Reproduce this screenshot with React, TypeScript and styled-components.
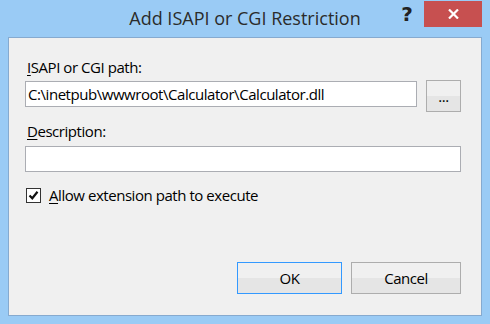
import React from 'react'
import styled, { createGlobalStyle } from 'styled-components'

const GlobalStyle = createGlobalStyle`
  html, body {
    margin: 0;
    padding: 0;
    background: #9acbf5;
  }
`

const Frame = styled.div`
  width: 490px;
  height: 324px;
  box-sizing: border-box;
  padding: 0 8px 8px 8px;
  background: #9acbf5;
  display: flex;
  flex-direction: column;
  font-family: 'Open Sans', 'Noto Sans', sans-serif;
  color: #000;
`

const TitleBar = styled.div`
  height: 37px;
  display: grid;
  grid-template-columns: 1fr auto 1fr;
  align-items: start;
`

const Title = styled.div`
  grid-column: 2;
  font-size: 18px;
  line-height: 37px;
  color: #2b2b2b;
  white-space: nowrap;
`

const Controls = styled.div`
  grid-column: 3;
  justify-self: end;
  display: flex;
  align-items: flex-start;
`

const HelpButton = styled.div`
  width: 34px;
  height: 28px;
  display: flex;
  align-items: center;
  justify-content: center;
  font-family: 'DejaVu Sans', sans-serif;
  font-weight: bold;
  font-size: 20px;
  color: #222;
`

const CloseButton = styled.div`
  width: 58px;
  height: 26px;
  margin-top: 1px;
  background: #c75050;
  display: flex;
  align-items: center;
  justify-content: center;
`

const Client = styled.div`
  flex: 1;
  background: #f0f0f0;
  border: 1px solid #86aacf;
  padding: 19px 20px 21px 16px;
  display: flex;
  flex-direction: column;
  font-size: 15px;
  line-height: 20px;
  letter-spacing: -0.45px;
`

const Label = styled.div<{ $gap?: number }>`
  padding-left: 2px;
  margin-top: ${p => p.$gap ?? 0}px;
`

const Key = styled.span`
  text-decoration: underline;
  text-underline-offset: 2px;
  text-decoration-thickness: 1px;
`

const FieldRow = styled.div`
  display: flex;
  align-items: flex-start;
  gap: 9px;
  margin-top: 3px;
`

const Field = styled.div<{ $top?: number }>`
  flex: 1;
  height: 26px;
  box-sizing: border-box;
  margin-top: ${p => p.$top ?? 0}px;
  background: #fff;
  border: 1px solid #abadb3;
  padding: 0 2px;
  line-height: 24px;
  white-space: nowrap;
  overflow: hidden;
`

const Button = styled.div<{ $width: number; $default?: boolean }>`
  width: ${p => p.$width}px;
  height: 32px;
  box-sizing: border-box;
  border: 1px solid ${p => (p.$default ? '#3399ff' : '#adadad')};
  background: linear-gradient(#f0f0f0 0, #f0f0f0 50%, #e5e5e5 50%, #e5e5e5 100%);
  display: flex;
  align-items: center;
  justify-content: center;
  font-size: 15px;
`

const CheckRow = styled.div`
  display: flex;
  align-items: center;
  gap: 8px;
  margin-top: 13px;
  padding-left: 1px;
`

const Box = styled.div`
  width: 15px;
  height: 15px;
  box-sizing: border-box;
  border: 1px solid #333;
  background: #fff;
  display: flex;
  align-items: center;
  justify-content: center;
`

const Buttons = styled.div`
  margin-top: auto;
  display: flex;
  justify-content: flex-end;
  gap: 9px;
`

const App = () => {
  return (
    <>
      <GlobalStyle />
      <Frame>
        <TitleBar>
          <Title>Add ISAPI or CGI Restriction</Title>
          <Controls>
            <HelpButton>?</HelpButton>
            <CloseButton>
              <svg width="11" height="10" viewBox="0 0 11 10">
                <path d="M1 0.5 L10 9.5 M10 0.5 L1 9.5" stroke="#fff" strokeWidth="2.2" />
              </svg>
            </CloseButton>
          </Controls>
        </TitleBar>
        <Client>
          <Label>
            <Key>I</Key>SAPI or CGI path:
          </Label>
          <FieldRow>
            <Field $top={1}>C:\inetpub\wwwroot\Calculator\Calculator.dll</Field>
            <Button $width={35}>...</Button>
          </FieldRow>
          <Label $gap={9}>
            <Key>D</Key>escription:
          </Label>
          <FieldRow>
            <Field $top={2} />
          </FieldRow>
          <CheckRow>
            <Box>
              <svg width="11" height="11" viewBox="0 0 11 11">
                <path d="M1.5 5.5 L4.3 8.3 L9.5 1.8" fill="none" stroke="#111" strokeWidth="2.2" />
              </svg>
            </Box>
            <span>
              <Key>A</Key>llow extension path to execute
            </span>
          </CheckRow>
          <Buttons>
            <Button $width={105} $default>OK</Button>
            <Button $width={110}>Cancel</Button>
          </Buttons>
        </Client>
      </Frame>
    </>
  )
}

export default App
